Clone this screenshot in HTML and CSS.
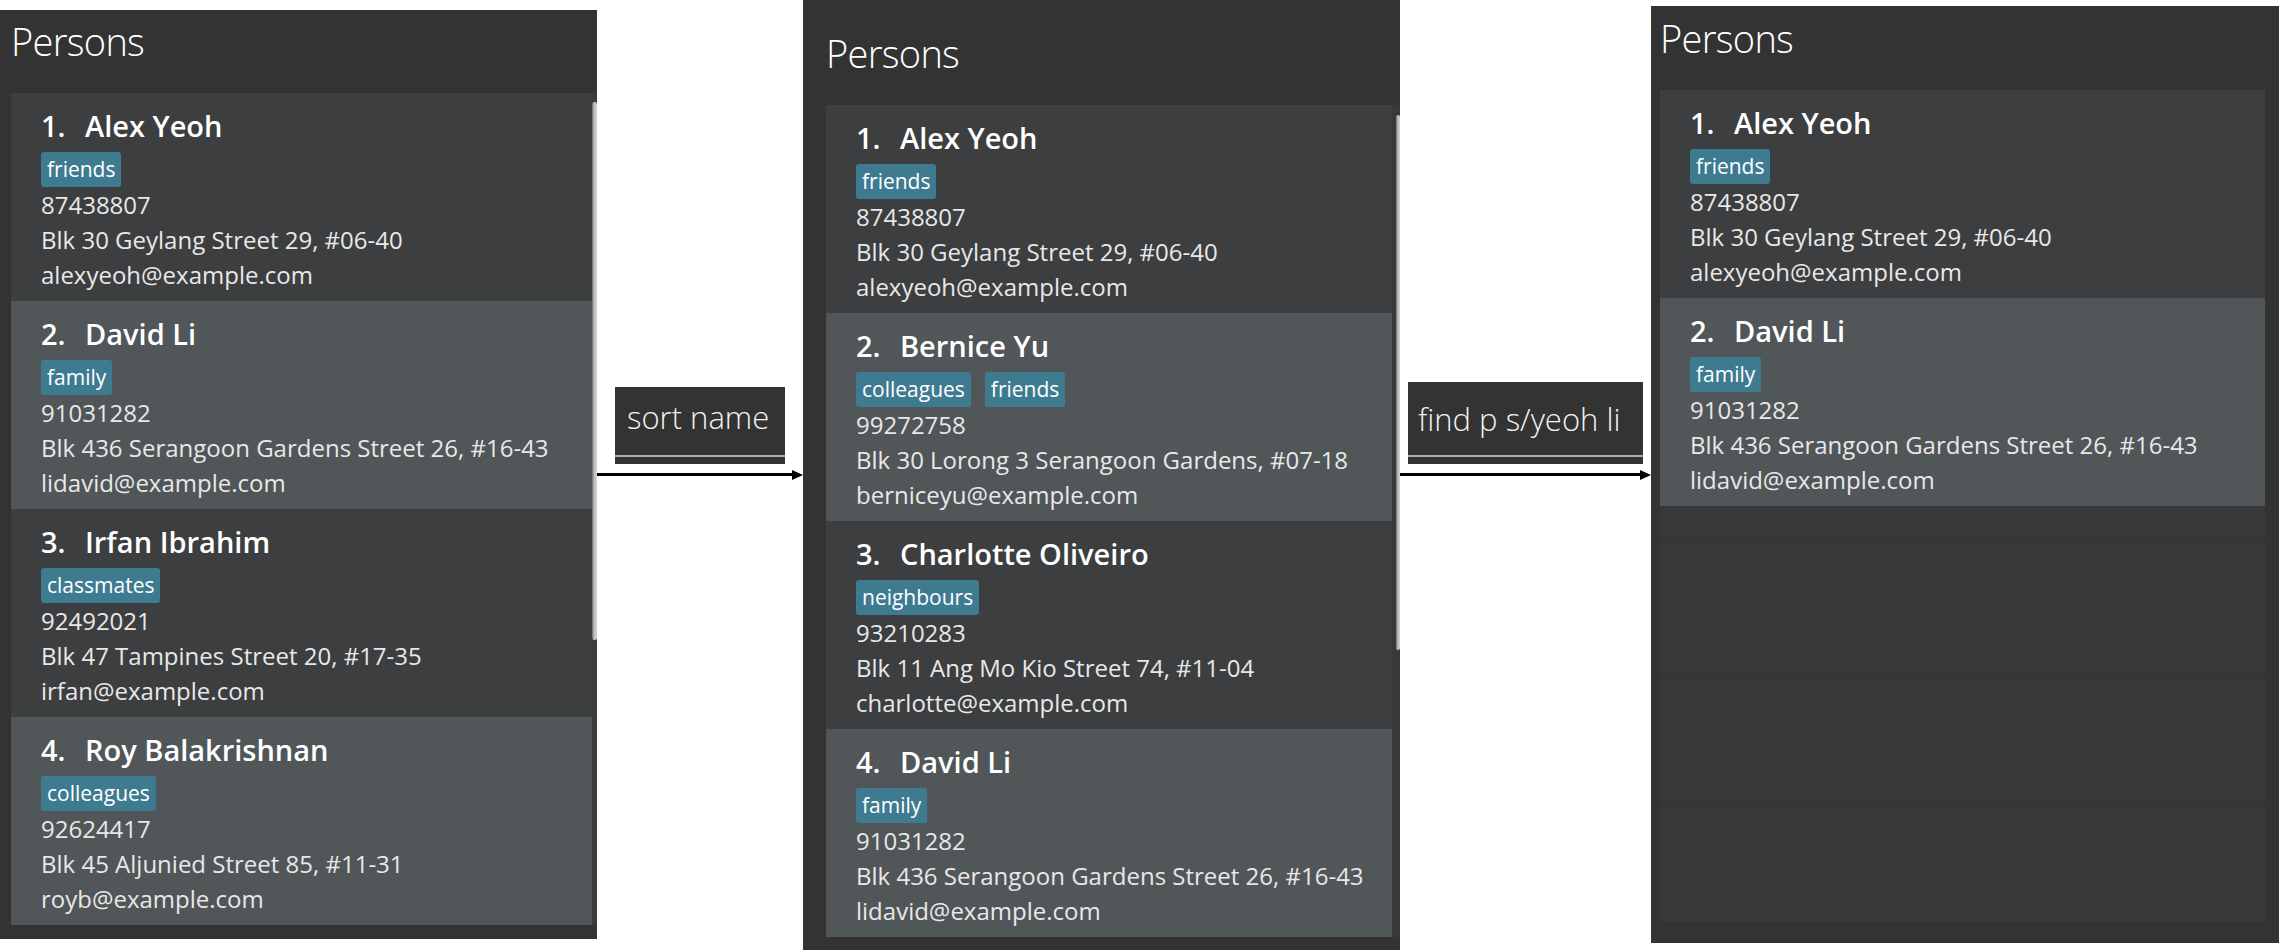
FILE: index.html
```html
<!DOCTYPE html>
<html>
<head>
<meta charset="utf-8">
<title>Persons</title>
<link rel="stylesheet" href="styles.css">
</head>
<body>
<div class="stage">

  <section class="panel p1">
    <h1 class="title">Persons</h1>
    <div class="listwrap">
      <div class="list">
        <div class="cell even">
          <div class="name"><span class="id">1.</span>Alex Yeoh</div>
          <div class="tags"><span class="tag">friends</span></div>
          <div class="line">87438807</div>
          <div class="line">Blk 30 Geylang Street 29, #06-40</div>
          <div class="line">alexyeoh@example.com</div>
        </div>
        <div class="cell odd">
          <div class="name"><span class="id">2.</span>David Li</div>
          <div class="tags"><span class="tag">family</span></div>
          <div class="line">91031282</div>
          <div class="line">Blk 436 Serangoon Gardens Street 26, #16-43</div>
          <div class="line">lidavid@example.com</div>
        </div>
        <div class="cell even">
          <div class="name"><span class="id">3.</span>Irfan Ibrahim</div>
          <div class="tags"><span class="tag">classmates</span></div>
          <div class="line">92492021</div>
          <div class="line">Blk 47 Tampines Street 20, #17-35</div>
          <div class="line">irfan@example.com</div>
        </div>
        <div class="cell odd">
          <div class="name"><span class="id">4.</span>Roy Balakrishnan</div>
          <div class="tags"><span class="tag">colleagues</span></div>
          <div class="line">92624417</div>
          <div class="line">Blk 45 Aljunied Street 85, #11-31</div>
          <div class="line">royb@example.com</div>
        </div>
      </div>
      <div class="scroll s1"><div class="thumb t1"></div></div>
    </div>
  </section>

  <div class="conn c1">
    <div class="cmd cmd1"><span class="cmdtext">sort name</span><span class="cmdline"></span></div>
    <div class="arrow"><span class="shaft"></span><span class="head"></span></div>
  </div>

  <section class="panel p2">
    <h1 class="title">Persons</h1>
    <div class="listwrap">
      <div class="list">
        <div class="cell even">
          <div class="name"><span class="id">1.</span>Alex Yeoh</div>
          <div class="tags"><span class="tag">friends</span></div>
          <div class="line">87438807</div>
          <div class="line">Blk 30 Geylang Street 29, #06-40</div>
          <div class="line">alexyeoh@example.com</div>
        </div>
        <div class="cell odd">
          <div class="name"><span class="id">2.</span>Bernice Yu</div>
          <div class="tags"><span class="tag">colleagues</span><span class="tag">friends</span></div>
          <div class="line">99272758</div>
          <div class="line">Blk 30 Lorong 3 Serangoon Gardens, #07-18</div>
          <div class="line">berniceyu@example.com</div>
        </div>
        <div class="cell even">
          <div class="name"><span class="id">3.</span>Charlotte Oliveiro</div>
          <div class="tags"><span class="tag">neighbours</span></div>
          <div class="line">93210283</div>
          <div class="line">Blk 11 Ang Mo Kio Street 74, #11-04</div>
          <div class="line">charlotte@example.com</div>
        </div>
        <div class="cell odd">
          <div class="name"><span class="id">4.</span>David Li</div>
          <div class="tags"><span class="tag">family</span></div>
          <div class="line">91031282</div>
          <div class="line">Blk 436 Serangoon Gardens Street 26, #16-43</div>
          <div class="line">lidavid@example.com</div>
        </div>
      </div>
      <div class="scroll s2"><div class="thumb t2"></div></div>
    </div>
  </section>

  <div class="conn c2">
    <div class="cmd cmd2"><span class="cmdtext">find p s/yeoh li</span><span class="cmdline"></span></div>
    <div class="arrow"><span class="shaft"></span><span class="head"></span></div>
  </div>

  <section class="panel p3">
    <h1 class="title">Persons</h1>
    <div class="listwrap">
      <div class="list list3">
        <div class="cell even">
          <div class="name"><span class="id">1.</span>Alex Yeoh</div>
          <div class="tags"><span class="tag">friends</span></div>
          <div class="line">87438807</div>
          <div class="line">Blk 30 Geylang Street 29, #06-40</div>
          <div class="line">alexyeoh@example.com</div>
        </div>
        <div class="cell odd">
          <div class="name"><span class="id">2.</span>David Li</div>
          <div class="tags"><span class="tag">family</span></div>
          <div class="line">91031282</div>
          <div class="line">Blk 436 Serangoon Gardens Street 26, #16-43</div>
          <div class="line">lidavid@example.com</div>
        </div>
        <div class="empty e1"></div>
        <div class="empty e2"></div>
        <div class="empty e3"></div>
        <div class="empty e4"></div>
      </div>
    </div>
  </section>

</div>
</body>
</html>
```

FILE: styles.css
```css
* {
  box-sizing: border-box;
  margin: 0;
  padding: 0;
}

html, body {
  background: #ffffff;
}

body {
  width: 2279px;
  height: 950px;
  overflow: hidden;
  font-family: "Open Sans", "Noto Sans", sans-serif;
  color: #ffffff;
}

.stage {
  display: flex;
  align-items: flex-start;
}

/* ---------- panels ---------- */
.panel {
  background: #333333;
  display: flex;
  flex-direction: column;
  flex: none;
}

.p1 {
  width: 597px;
  height: 929px;
  margin-top: 10px;
  padding: 6px 0 0 11px;
}

.p2 {
  width: 597px;
  height: 950px;
  padding: 28px 0 0 23px;
}

.p3 {
  width: 628px;
  height: 937px;
  margin-top: 6px;
  padding: 7px 14px 0 9px;
}

.title {
  font-weight: 300;
  font-size: 38px;
  letter-spacing: -0.7px;
  line-height: 50px;
  height: 50px;
  margin-bottom: 27px;
  color: #ffffff;
}

.listwrap {
  display: flex;
}

.list {
  flex: 1;
  min-width: 0;
}

.list3 {
  background: #383838;
}

/* ---------- cells ---------- */
.cell {
  height: 208px;
  padding: 15px 0 0 30px;
}

.even {
  background: #3c3e3f;
}

.odd {
  background: #515658;
}

.name {
  font-weight: 600;
  font-size: 29px;
  line-height: 36px;
  color: #ffffff;
  white-space: nowrap;
}

.id {
  display: inline-block;
  width: 44px;
}

.tags {
  display: flex;
  gap: 14px;
  margin-top: 8px;
  height: 35px;
}

.tag {
  background: #3e7b91;
  color: #ffffff;
  font-size: 21px;
  line-height: 35px;
  padding: 0 6px;
  border-radius: 3px;
}

.line {
  font-size: 24px;
  line-height: 35px;
  color: #e8e8e8;
  white-space: nowrap;
}

/* empty rows of the filtered list */
.empty {
  border-top: 1px solid #333333;
}

.e1 { height: 32px; border-top: none; }
.e2 { height: 135px; }
.e3 { height: 134px; }
.e4 { height: 115px; }

/* ---------- scrollbars ---------- */
.scroll {
  flex: none;
  display: flex;
  flex-direction: column;
  align-items: flex-end;
}

.s1 {
  width: 5px;
  background: #3a3b3c;
}

.s2 {
  width: 8px;
  background: #39393a;
}

.thumb {
  background: linear-gradient(90deg, #6a6a6a 0%, #bdbdbd 45%, #d4d4d4 100%);
  border-radius: 2px;
}

.t1 {
  width: 5px;
  margin-top: 9px;
  height: 538px;
}

.t2 {
  width: 4px;
  margin-top: 10px;
  height: 535px;
}

/* ---------- command connectors ---------- */
.conn {
  flex: none;
  display: flex;
  flex-direction: column;
}

.c1 {
  width: 206px;
  padding-top: 387px;
}

.c2 {
  width: 251px;
  padding-top: 382px;
}

.cmd {
  background: #333333;
  display: flex;
  flex-direction: column;
  color: #f2f2f2;
  font-weight: 300;
  font-size: 31px;
  line-height: 42px;
  white-space: nowrap;
}

.cmd1 {
  width: 170px;
  margin-left: 18px;
  padding: 9px 0 7px 12px;
}

.cmd2 {
  width: 235px;
  margin-left: 8px;
  padding: 16px 0 7px 10px;
}

.cmdtext {
  display: block;
}

.cmdline {
  display: block;
  height: 2px;
  background: #a9a9a9;
  margin-left: -12px;
}

.cmd1 .cmdline {
  margin-top: 17px;
}

.cmd2 .cmdline {
  margin-top: 15px;
  margin-left: -10px;
}

.arrow {
  display: flex;
  align-items: center;
  margin-top: 5px;
  height: 11px;
}

.shaft {
  flex: 1;
  height: 3px;
  background: #000000;
}

.head {
  width: 0;
  height: 0;
  border-top: 5.5px solid transparent;
  border-bottom: 5.5px solid transparent;
  border-left: 11px solid #000000;
}
```
